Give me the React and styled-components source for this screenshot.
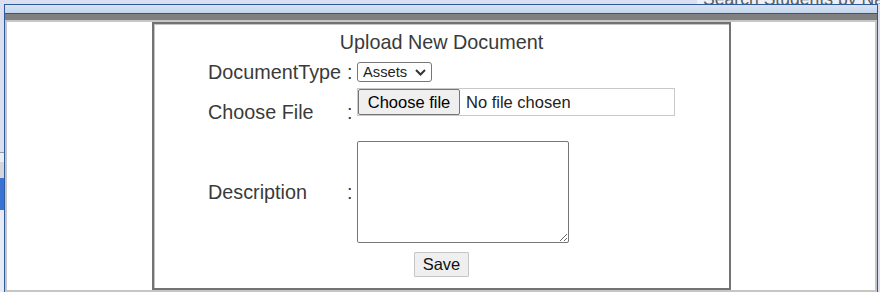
import React from 'react'
import styled, { createGlobalStyle } from 'styled-components'

const GlobalStyle = createGlobalStyle`
  html, body {
    margin: 0;
    padding: 0;
    background: #dcdff0;
  }
  body {
    font-family: "Liberation Sans", Arial, sans-serif;
  }
`

const Page = styled.div`
  width: 880px;
  height: 292px;
  overflow: hidden;
  display: flex;
  flex-direction: column;
  background: #dcdff0;
`

const TopStrip = styled.div`
  height: 4px;
  display: flex;
  justify-content: flex-end;
  overflow: hidden;
`

// the search box of the page behind, only its lower edge shows
const SearchHint = styled.div`
  width: 177px;
  background: #eef0f9;
  color: #5c5c5c;
  font-size: 17.6px;
  line-height: 18px;
  white-space: nowrap;
  margin-top: -10px;
  padding-left: 6px;
`

const Body = styled.div`
  flex: 1;
  display: flex;
`

const LeftGutter = styled.div`
  width: 4px;
  display: flex;
  flex-direction: column;
`

const GutterPiece = styled.div`
  height: ${p => p.$h}px;
  background: ${p => p.$c};
`

const Window = styled.div`
  width: 874px;
  box-sizing: border-box;
  border: 1px solid #2b5a9b;
  border-bottom: none;
  display: flex;
  flex-direction: column;
`

const TitleBar = styled.div`
  height: 8px;
  background: linear-gradient(#d8e3f3, #c4d5ec);
  border-bottom: 1px solid #2b5a9b;
`

const GrayBand = styled.div`
  height: 6px;
  background: #808080;
`

const Content = styled.div`
  flex: 1;
  background: #fff;
  border: 2px solid #c6c6c6;
  display: flex;
`

const Panel = styled.div`
  margin-left: 145px;
  width: 579px;
  height: 268px;
  box-sizing: border-box;
  border: 2px solid #737373;
  box-shadow: inset 1px 1px 0 #c4c4c4;
  display: flex;
  flex-direction: column;
  align-items: center;
`

const Title = styled.div`
  margin-top: 7px;
  font-size: 19.8px;
  line-height: 23px;
  color: #3a3a3a;
`

const FieldRow = styled.div`
  margin-top: ${p => p.$top}px;
  width: 467px;
  display: grid;
  grid-template-columns: 139px 10px 318px;
  align-items: ${p => p.$align || 'center'};
`

const Label = styled.div`
  font-size: 19.8px;
  line-height: 20px;
  color: #3a3a3a;
  white-space: nowrap;
  margin-top: ${p => p.$top || 0}px;
`

const SelectBox = styled.div`
  width: 75px;
  height: 20px;
  box-sizing: border-box;
  border: 1px solid #767676;
  border-radius: 3px;
  display: flex;
  align-items: center;
  justify-content: space-between;
  padding: 0 5px 0 5px;
  font-size: 14.7px;
  color: #222;
`

const FileBox = styled.div`
  width: 318px;
  height: 28px;
  box-sizing: border-box;
  border: 1px solid #c9c9c9;
  display: flex;
  align-items: center;
  font-size: 16.5px;
  color: #222;
`

const FileButton = styled.button`
  height: 26px;
  width: 102px;
  box-sizing: border-box;
  border: 1px solid #767676;
  border-radius: 2px;
  background: #efefef;
  font-family: "Liberation Sans", Arial, sans-serif;
  font-size: 16.5px;
  color: #000;
  padding: 0;
  margin-right: 6px;
`

const TextArea = styled.textarea`
  display: block;
  width: 212px;
  height: 102px;
  box-sizing: border-box;
  border: 1px solid #767676;
  border-radius: 2px;
  margin: 0;
  padding: 2px;
`

const ButtonRow = styled.div`
  margin-top: 9px;
  display: flex;
  justify-content: center;
`

const SaveButton = styled.button`
  width: 55px;
  height: 25px;
  box-sizing: border-box;
  border: 1px solid #c6c6c6;
  border-radius: 1px;
  background: #efefef;
  font-family: "Liberation Sans", Arial, sans-serif;
  font-size: 16.5px;
  color: #111;
  padding: 0;
`

function Chevron() {
  return (
    <svg width="11" height="7" viewBox="0 0 11 7">
      <path d="M1 1 L5.5 5.5 L10 1" fill="none" stroke="#333" strokeWidth="2" />
    </svg>
  )
}

export default function App() {
  return (
    <Page>
      <GlobalStyle />
      <TopStrip>
        <SearchHint>Search Students by Name</SearchHint>
      </TopStrip>
      <Body>
        <LeftGutter>
          <GutterPiece $h={148} $c="#dcdff0" />
          <GutterPiece $h={1} $c="#9a9aa6" />
          <GutterPiece $h={9} $c="#eceef6" />
          <GutterPiece $h={16} $c="#d6d6da" />
          <GutterPiece $h={32} $c="#3a72d6" />
          <GutterPiece $h={82} $c="#e8eaf6" />
        </LeftGutter>
        <Window>
          <TitleBar />
          <GrayBand />
          <Content>
            <Panel>
              <Title>Upload New Document</Title>
              <FieldRow $top={8}>
                <Label>DocumentType</Label>
                <Label>:</Label>
                <SelectBox>
                  <span>Assets</span>
                  <Chevron />
                </SelectBox>
              </FieldRow>
              <FieldRow $top={6} $align="start">
                <Label $top={14}>Choose File</Label>
                <Label $top={14}>:</Label>
                <FileBox>
                  <FileButton>Choose file</FileButton>
                  <span>No file chosen</span>
                </FileBox>
              </FieldRow>
              <FieldRow $top={19}>
                <Label>Description</Label>
                <Label>:</Label>
                <TextArea />
              </FieldRow>
              <ButtonRow>
                <SaveButton>Save</SaveButton>
              </ButtonRow>
            </Panel>
          </Content>
        </Window>
      </Body>
    </Page>
  )
}
